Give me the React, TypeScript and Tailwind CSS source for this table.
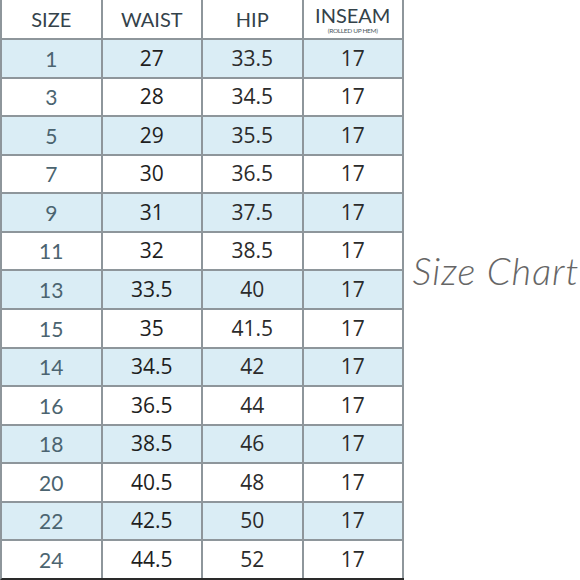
import React from "react";

const rows: [string, string, string, string][] = [
  ["1", "27", "33.5", "17"],
  ["3", "28", "34.5", "17"],
  ["5", "29", "35.5", "17"],
  ["7", "30", "36.5", "17"],
  ["9", "31", "37.5", "17"],
  ["11", "32", "38.5", "17"],
  ["13", "33.5", "40", "17"],
  ["15", "35", "41.5", "17"],
  ["14", "34.5", "42", "17"],
  ["16", "36.5", "44", "17"],
  ["18", "38.5", "46", "17"],
  ["20", "40.5", "48", "17"],
  ["22", "42.5", "50", "17"],
  ["24", "44.5", "52", "17"],
];

const head =
  "flex flex-col items-center justify-center border-r-2 border-[#8e969b] text-[#34424a] text-[20px] leading-none font-['Lato',sans-serif]";

export default function App() {
  return (
    <div className="w-[580px] h-[580px] bg-white flex font-['Open_Sans',sans-serif]">
      <div className="w-[404px] h-[580px] grid grid-cols-4 grid-rows-[38px_repeat(14,minmax(0,1fr))] border-l-2 border-l-[#8e969b] border-b-2 border-b-[#2a2a2a]">
        <div className={head}>SIZE</div>
        <div className={head}>WAIST</div>
        <div className={head}>HIP</div>
        <div className={head}>
          <span className="leading-[22px] mt-[1px]">INSEAM</span>
          <span className="text-[6.5px] leading-[8px] mt-[1px] tracking-tighter text-[#4a5860]">(ROLLED UP HEM)</span>
        </div>
        {rows.map((r, i) => {
          const bg = i % 2 === 0 ? "bg-[#daedf5]" : "bg-white";
          const cell = `flex items-center justify-center border-t-2 border-r-2 border-[#8e969b] text-[21px] ${bg}`;
          return (
            <React.Fragment key={i}>
              <div className={`${cell} text-[#4b6470] font-['Lato',sans-serif]`}>{r[0]}</div>
              <div className={`${cell} text-[#1e1e1e] font-medium`}>{r[1]}</div>
              <div className={`${cell} text-[#2b2b2b]`}>{r[2]}</div>
              <div className={`${cell} text-[#2b2b2b]`}>{r[3]}</div>
            </React.Fragment>
          );
        })}
      </div>
      <div className="flex-1 flex items-center justify-center pl-[8px] pb-[40px]">
        <span className="font-['Lato',sans-serif] italic font-light text-[38px] text-[#666] tracking-wide">
          Size Chart
        </span>
      </div>
    </div>
  );
}
